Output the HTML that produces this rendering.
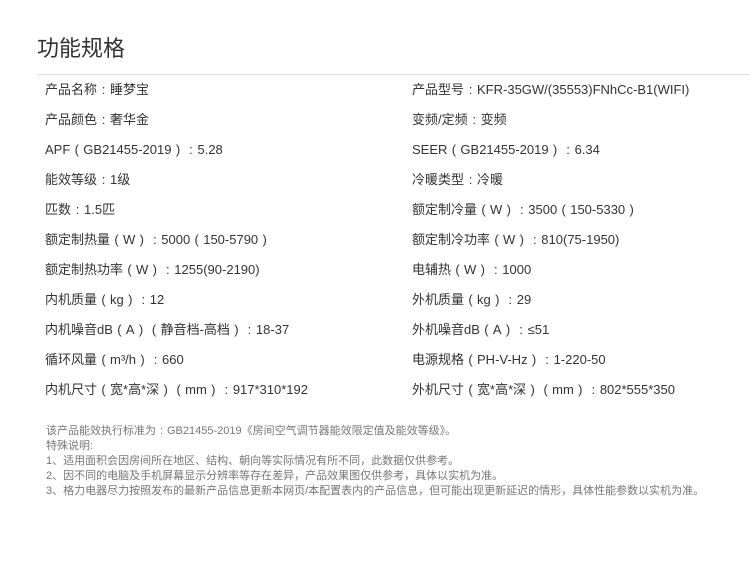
<!DOCTYPE html>
<html><head><meta charset="utf-8"><style>
body{margin:0;background:#fff;font-family:"Liberation Sans","Noto Sans CJK SC",sans-serif;color:#333;width:750px;height:583px;overflow:hidden;position:relative}
h1{position:absolute;left:37px;top:34px;margin:0;font-size:22px;font-weight:normal;color:#333;line-height:30px}
.line{position:absolute;left:37px;right:0;top:74px;height:1px;background:#ddd}
.r{position:absolute;font-size:13px;line-height:16px;white-space:nowrap}
.notes{position:absolute;left:46px;top:424px;font-size:11px;line-height:15px;color:#777}
i{font-style:normal;display:inline-block;width:1em;text-align:center}
</style></head><body>
<h1>功能规格</h1><div class="line"></div>
<div class="r" style="left:45px;top:82px">产品名称<i>:</i>睡梦宝</div>
<div class="r" style="left:412px;top:82px">产品型号<i>:</i>KFR-35GW/(35553)FNhCc-B1(WIFI)</div>
<div class="r" style="left:45px;top:112px">产品颜色<i>:</i>奢华金</div>
<div class="r" style="left:412px;top:112px">变频/定频<i>:</i>变频</div>
<div class="r" style="left:45px;top:142px">APF<i>(</i>GB21455-2019<i>)</i><i>:</i>5.28</div>
<div class="r" style="left:412px;top:142px">SEER<i>(</i>GB21455-2019<i>)</i><i>:</i>6.34</div>
<div class="r" style="left:45px;top:172px">能效等级<i>:</i>1级</div>
<div class="r" style="left:412px;top:172px">冷暖类型<i>:</i>冷暖</div>
<div class="r" style="left:45px;top:202px">匹数<i>:</i>1.5匹</div>
<div class="r" style="left:412px;top:202px">额定制冷量<i>(</i>W<i>)</i><i>:</i>3500<i>(</i>150-5330<i>)</i></div>
<div class="r" style="left:45px;top:232px">额定制热量<i>(</i>W<i>)</i><i>:</i>5000<i>(</i>150-5790<i>)</i></div>
<div class="r" style="left:412px;top:232px">额定制冷功率<i>(</i>W<i>)</i><i>:</i>810(75-1950)</div>
<div class="r" style="left:45px;top:262px">额定制热功率<i>(</i>W<i>)</i><i>:</i>1255(90-2190)</div>
<div class="r" style="left:412px;top:262px">电辅热<i>(</i>W<i>)</i><i>:</i>1000</div>
<div class="r" style="left:45px;top:292px">内机质量<i>(</i>kg<i>)</i><i>:</i>12</div>
<div class="r" style="left:412px;top:292px">外机质量<i>(</i>kg<i>)</i><i>:</i>29</div>
<div class="r" style="left:45px;top:322px">内机噪音dB<i>(</i>A<i>)</i><i>(</i>静音档-高档<i>)</i><i>:</i>18-37</div>
<div class="r" style="left:412px;top:322px">外机噪音dB<i>(</i>A<i>)</i><i>:</i>≤51</div>
<div class="r" style="left:45px;top:352px">循环风量<i>(</i>m³/h<i>)</i><i>:</i>660</div>
<div class="r" style="left:412px;top:352px">电源规格<i>(</i>PH-V-Hz<i>)</i><i>:</i>1-220-50</div>
<div class="r" style="left:45px;top:382px">内机尺寸<i>(</i>宽*高*深<i>)</i><i>(</i>mm<i>)</i><i>:</i>917*310*192</div>
<div class="r" style="left:412px;top:382px">外机尺寸<i>(</i>宽*高*深<i>)</i><i>(</i>mm<i>)</i><i>:</i>802*555*350</div>
<div class="notes">该产品能效执行标准为<i>:</i>GB21455-2019《房间空气调节器能效限定值及能效等级》。<br>特殊说明:<br>1、适用面积会因房间所在地区、结构、朝向等实际情况有所不同，此数据仅供参考。<br>2、因不同的电脑及手机屏幕显示分辨率等存在差异，产品效果图仅供参考，具体以实机为准。<br>3、格力电器尽力按照发布的最新产品信息更新本网页/本配置表内的产品信息，但可能出现更新延迟的情形，具体性能参数以实机为准。</div>
</body></html>
